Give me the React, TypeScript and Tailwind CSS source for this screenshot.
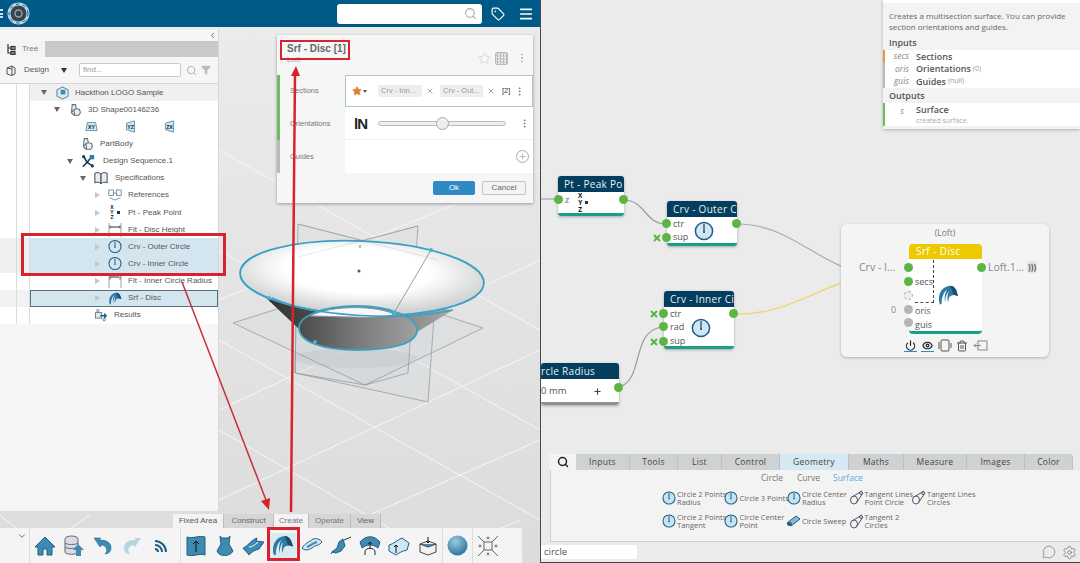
import React from "react";
import { Search, Tag, Menu, Filter, Star, X, Plus, MoreVertical, MessageCircle, Settings, Power, Eye, Trash2, ChevronDown, ChevronLeft } from "lucide-react";

const B = "#3f8ab0";
const D = "#1f5f85";

function Loft({ s = 22 }: { s?: number }) {
  return (
    <svg width={s} height={s} viewBox="0 0 24 24">
      <path d="M3 22C0 12 5 3 14 2c4 0 7 3 8 8l1 3-4-1c-3 0-5 1-6 3l-1 5c-1-4-1-8 1-12-3 3-4 7-4 12-1-4-1-9 2-14-4 3-6 9-6 16z" fill="#2a7aa3" />
      <path d="M14 2c4 0 7 3 8 8l1 3-4-1c-2-1-2-5-5-10z" fill="#174f70" />
    </svg>
  );
}
function CircleIcon({ s = 15, fill = "#cfe6f3" }: { s?: number; fill?: string }) {
  return (
    <svg width={s} height={s} viewBox="0 0 20 20">
      <circle cx="10" cy="10" r="8.6" fill={fill} stroke="#1f5f85" strokeWidth="1.5" />
      <path d="M10 3v7.5" stroke="#1f3f55" strokeWidth="1.2" />
      <circle cx="10" cy="11" r="1" fill="#1f3f55" />
    </svg>
  );
}
function Shape3D({ s = 13 }: { s?: number }) {
  return (
    <svg width={s} height={s} viewBox="0 0 16 16" fill="none" stroke="#5f6f78" strokeWidth="1.3">
      <path d="M4 2h4l1 5 4 1 1 4-2 3H6l-3-3z" fill="#eef1f3" />
      <path d="M6 8l3-1M6 8l-3 4M6 8l1 7" />
    </svg>
  );
}
function PlaneIcon({ label, wide }: { label: string; wide?: boolean }) {
  return (
    <svg width="13" height="13" viewBox="0 0 16 16">
      {wide ? <path d="M3 3h10l2 10H1z" fill="#cfe6f3" stroke="#3f8ab0" /> : <path d="M3 4l10-3v14L3 12z" fill="#cfe6f3" stroke="#3f8ab0" />}
      <text x="8" y="11" fontSize="6.5" fontWeight="700" fontFamily="Liberation Sans" textAnchor="middle" fill="#222">{label}</text>
    </svg>
  );
}
function DesignSeq() {
  return (
    <svg width="15" height="15" viewBox="0 0 16 16">
      <path d="M3 2l4 7-5 5M7 9l6 4M7 9l4-5" stroke="#153b55" strokeWidth="1.8" fill="none" />
      <rect x="10" y="0.5" width="5" height="5" fill="#2f7ea6" />
      <circle cx="3" cy="2.5" r="1.8" fill="#153b55" />
      <circle cx="13" cy="13" r="1.8" fill="#153b55" />
    </svg>
  );
}
function BookIcon() {
  return (
    <svg width="15" height="14" viewBox="0 0 16 15" fill="#e8edf0" stroke="#33424c" strokeWidth="1.1">
      <path d="M1 2c3-1 5-1 7 1v11c-2-2-4-2-7-1z" />
      <path d="M15 2c-3-1-5-1-7 1v11c2-2 4-2 7-1z" />
    </svg>
  );
}
function RefIcon() {
  return (
    <svg width="16" height="14" viewBox="0 0 18 15" fill="#f6f8f9" stroke="#5f7f92" strokeWidth="1">
      <rect x="1" y="1" width="6" height="7" />
      <rect x="11" y="1" width="6" height="7" />
      <path d="M7 5h4M2 11l7 3 7-3" fill="none" />
    </svg>
  );
}
function XYZ({ big }: { big?: boolean }) {
  return (
    <div className="flex items-center gap-[3px] leading-none">
      <div className={big ? "flex flex-col items-center text-[6.500px] font-bold leading-[7px] text-[#111]" : "flex flex-col items-center text-[5px] font-bold leading-[5px] text-[#111]"}>
        <span>X</span><span>Y</span><span>Z</span>
      </div>
      <span className="block h-[3px] w-[3px] bg-[#234]" />
    </div>
  );
}
function FltIcon({ inner }: { inner?: boolean }) {
  return (
    <svg width="14" height="14" viewBox="0 0 14 14" stroke="#333" fill="none" strokeWidth="0.8">
      <path d="M1 0v14M13 0v14" stroke="#888" />
      <path d={inner ? "M2 3h9" : "M2 4h10"} strokeWidth="1" />
      <path d="M2 2.5v3M12 2.5v3" />
    </svg>
  );
}
function Results() {
  return (
    <svg width="16" height="14" viewBox="0 0 18 16">
      <rect x="2" y="5" width="8" height="7" fill="#dfe9ef" stroke="#567" />
      <circle cx="5" cy="2.5" r="1.6" fill="none" stroke="#567" />
      <circle cx="13" cy="14" r="1.6" fill="none" stroke="#567" />
      <path d="M8 8h5V5l4 4-4 4v-3H8z" fill="#1f5f85" />
    </svg>
  );
}
function Tri({ open, hide }: { open?: boolean; hide?: boolean }) {
  if (hide) return <span className="w-[7px] shrink-0" />;
  return open ? (
    <span className="h-0 w-0 shrink-0 border-x-[3.5px] border-t-[5px] border-x-transparent border-t-[#666]" />
  ) : (
    <span className="ml-[1px] mr-[1px] h-0 w-0 shrink-0 border-y-[3.5px] border-l-[5px] border-y-transparent border-l-[#c4c4c4]" />
  );
}

type RowProps = {
  pad: string;
  gapTo: string;
  text: string;
  open?: boolean;
  hide?: boolean;
  icon: React.ReactNode;
  bg?: string;
  left?: string;
  textGap?: string;
};
function Row({ pad, gapTo, text, open, hide, icon, bg = "bg-white", left = "bg-white", textGap = "ml-[5px]" }: RowProps) {
  return (
    <div className="flex h-[17.15px] shrink-0">
      <div className={`w-[17px] border-r border-[#dcdcdc] ${left}`} />
      <div className={`w-[13px] border-r border-[#dcdcdc] ${left}`} />
      <div className={`flex flex-1 items-center ${pad} ${bg}`}>
        <Tri open={open} hide={hide} />
        <span className={`flex h-[14px] w-[14px] shrink-0 items-center justify-center ${gapTo}`}>{icon}</span>
        <span className={`${textGap} whitespace-nowrap text-[8px] text-[#555]`}>{text}</span>
      </div>
    </div>
  );
}

function TreePanel() {
  return (
    <div className="relative z-10 mt-[3px] flex h-[481px] w-[219px] flex-col border-r border-[#d8d8d8] bg-[#f6f6f6] font-['Liberation_Sans',sans-serif]">
      <div className="flex h-[11px] items-center justify-end pr-[1px] text-[#666]">
        <ChevronLeft size={9} strokeWidth={2.5} />
      </div>
      <div className="flex h-[16px] bg-[#c9c9c9]">
        <div className="flex w-[45px] items-center gap-[6px] bg-[#f4f4f4] pl-[6px]">
          <svg width="10" height="11" viewBox="0 0 10 11" fill="none" stroke="#333" strokeWidth="1.2"><path d="M2 0v9h7M2 4h6" /><rect x="5" y="2.5" width="4" height="3" /><rect x="5" y="7.5" width="4" height="3" /></svg>
          <span className="text-[8px] text-[#777]">Tree</span>
        </div>
      </div>
      <div className="flex h-[27px] items-center border-b border-[#d4d4d4] pl-[6px] text-[#555]">
        <svg width="10" height="11" viewBox="0 0 10 11" fill="none" stroke="#555"><path d="M1 3l5-2 3 2v6l-3 1.500-5-1.500zM6 1v9.500M1 3l5 1" /></svg>
        <span className="ml-[8px] w-[37px] text-[8px]">Design</span>
        <span className="h-0 w-0 border-x-[3.5px] border-t-[5px] border-x-transparent border-t-[#333]" />
        <div className="ml-[12px] flex h-[14px] w-[102px] items-center rounded-[2px] border border-[#c9c9c9] bg-white pl-[3px] text-[8px] text-[#999]">find...</div>
        <Search size={11} className="ml-[5px] text-[#aaa]" />
        <Filter size={10} className="ml-[4px] text-[#bbb]" fill="#bbb" />
      </div>
      <div className="flex flex-1 flex-col">
        <Row pad="pl-[11px]" gapTo="ml-[8px]" text="Hackthon LOGO Sample" open icon={<svg width="13" height="14" viewBox="0 0 14 15"><path d="M7 1l6 3v7l-6 3-6-3V4z" fill="#dce9f0" stroke="#4a7a96" /><rect x="5" y="4" width="5" height="5" fill="#3f8ab0" /></svg>} bg="bg-[#f0f0f0]" textGap="ml-[6px]" />
        <Row pad="pl-[24px]" gapTo="ml-[8px]" text="3D Shape00146236" open icon={<Shape3D />} textGap="ml-[6px]" />
        <div className="flex h-[17.15px] shrink-0">
          <div className="w-[17px] border-r border-[#dcdcdc] bg-white" />
          <div className="w-[13px] border-r border-[#dcdcdc] bg-white" />
          <div className="flex flex-1 items-center gap-[26px] bg-white pl-[55px]">
            <PlaneIcon label="XY" wide />
            <PlaneIcon label="YZ" />
            <PlaneIcon label="ZX" />
          </div>
        </div>
        <Row pad="pl-[36px]" gapTo="ml-[7px]" hide text="PartBody" icon={<Shape3D />} textGap="ml-[6px]" />
        <Row pad="pl-[37px]" gapTo="ml-[8px]" open text="Design Sequence.1" icon={<DesignSeq />} textGap="ml-[8px]" />
        <Row pad="pl-[50px]" gapTo="ml-[8px]" open text="Specifications" icon={<BookIcon />} textGap="ml-[7px]" />
        <Row pad="pl-[64px]" gapTo="ml-[7px]" text="References" icon={<RefIcon />} textGap="ml-[6px]" />
        <Row pad="pl-[64px]" gapTo="ml-[7px]" text="Pt - Peak Point" icon={<XYZ />} textGap="ml-[6px]" />
        <Row pad="pl-[64px]" gapTo="ml-[7px]" text="Flt - Disc Height" icon={<FltIcon />} textGap="ml-[6px]" />
        <Row pad="pl-[64px]" gapTo="ml-[7px]" text="Crv - Outer Circle" icon={<CircleIcon />} bg="bg-[#d3e5ef]" left="bg-[#efefef]" textGap="ml-[6px]" />
        <Row pad="pl-[64px]" gapTo="ml-[7px]" text="Crv - Inner Circle" icon={<CircleIcon />} bg="bg-[#d3e5ef]" left="bg-[#efefef]" textGap="ml-[6px]" />
        <Row pad="pl-[64px]" gapTo="ml-[7px]" text="Flt - Inner Circle Radius" icon={<FltIcon inner />} textGap="ml-[6px]" />
        <div className="flex h-[17.15px] shrink-0">
          <div className="w-[17px] border-r border-[#dcdcdc] bg-[#f2f2f2]" />
          <div className="w-[13px] border-r border-[#dcdcdc] bg-[#f2f2f2]" />
          <div className="flex flex-1 items-center border border-[#55707f] bg-[#d3e5ef] pl-[63px]">
            <Tri />
            <span className="ml-[7px] flex h-[14px] w-[14px] items-center justify-center"><Loft s={15} /></span>
            <span className="ml-[6px] text-[8px] text-[#555]">Srf - Disc</span>
          </div>
        </div>
        <Row pad="pl-[57px]" gapTo="ml-0" hide text="Results" icon={<Results />} textGap="ml-[6px]" />
      </div>
    </div>
  );
}

function Scene() {
  return (
    <svg className="absolute left-0 top-0 h-[563px] w-[540px]" viewBox="0 0 540 563">
      <defs>
        <linearGradient id="vp" x1="0" y1="0" x2="0" y2="1">
          <stop offset="0" stopColor="#ececec" />
          <stop offset="1" stopColor="#dcdcdc" />
        </linearGradient>
        <radialGradient id="bowlIn" cx="0.48" cy="0.4" r="0.6">
          <stop offset="0.5" stopColor="#ffffff" />
          <stop offset="1" stopColor="#c9cccb" />
        </radialGradient>
        <linearGradient id="cone" x1="0" y1="0" x2="1" y2="0">
          <stop offset="0" stopColor="#2e2e2e" />
          <stop offset="0.35" stopColor="#555555" />
          <stop offset="1" stopColor="#a8a8a8" />
        </linearGradient>
        <linearGradient id="cone2" x1="0" y1="0" x2="1" y2="0">
          <stop offset="0" stopColor="#4a4a4a" />
          <stop offset="0.5" stopColor="#7a7a7a" />
          <stop offset="1" stopColor="#a0a0a0" />
        </linearGradient>
      </defs>
      <rect width="540" height="563" fill="url(#vp)" />
      <g stroke="#f6f6f6" strokeWidth="1" fill="none">
        <path d="M219 300L540 170M219 410L540 260M219 500L540 350M260 563L540 440M219 150L540 330M219 250L540 430M219 340L540 520M219 430L450 563M0 515L60 563M20 563L90 515M420 563L520 520" />
      </g>
      <ellipse cx="355" cy="358" rx="62" ry="10" fill="#cfcfcf" opacity="0.6" />
      <g stroke="#8a939a" strokeWidth="0.7" fill="#b9c4cc" fillOpacity="0.1">
        <path d="M298 224L438 260L428 402L295 373z" />
        <path d="M418 226L297 258L295 373L365 385L408 373z" />
        <path d="M233 323L353 285L483 328L365 385z" />
      </g>
      <path d="M263 295L300 330L417 332L453 310L362 300z" fill="url(#cone)" />
      <ellipse cx="362" cy="278" rx="122" ry="37" transform="rotate(2.500 362 278)" fill="url(#bowlIn)" stroke="#3aa0c4" strokeWidth="1.800" />
      <path d="M299 328c0-12 24-22 58-22s60 12 60 24c0 14-26 20-60 20s-58-8-58-22z" fill="url(#cone2)" stroke="#3aa0c4" strokeWidth="1.800" />
      <path d="M310 316c20-11 68-11 86-1-12 1-22 3-44 2-16 0-30-1-42-1z" fill="#f8f8f8" stroke="#7c97a3" strokeWidth="1" />
      <path d="M272 298C310 316 400 322 453 310" fill="none" stroke="#3aa0c4" strokeWidth="1.600" />
      <path d="M298 257L418 226M298 224L438 260" stroke="#8a939a" strokeWidth="0.5" opacity="0.4" />
      <path d="M394 313L431 250" stroke="#7d8790" strokeWidth="0.8" />
      <circle cx="359" cy="271" r="1.500" fill="#555" />
      <path d="M360 245v3" stroke="#777" />
      <g fill="#43b3d6">
        <circle cx="431" cy="250" r="2" /><circle cx="394" cy="313" r="2.500" /><circle cx="269" cy="298" r="2" /><circle cx="315" cy="342" r="2" />
      </g>
    </svg>
  );
}

function Overlays() {
  return (
    <>
      <div className="absolute left-[21px] top-[233px] z-30 h-[43px] w-[205px] border-[3px] border-[#d8232f]" />
      <div className="absolute left-[280px] top-[40px] z-30 h-[20px] w-[70px] border-[2px] border-[#d8232f]" />
      <div className="absolute left-[267px] top-[527px] z-30 h-[34px] w-[33px] border-[3px] border-[#d8232f]" />
      <svg className="pointer-events-none absolute left-0 top-0 z-20 h-[563px] w-[540px]" viewBox="0 0 540 563">
        <path d="M291 512L295 74" stroke="#d8232f" strokeWidth="2.500" fill="none" />
        <path d="M296 66l-5 10h9z" fill="#d8232f" />
        <path d="M182 282L266 500" stroke="#c8303a" strokeWidth="1.500" fill="none" />
        <path d="M269 510l-8-9 9-3z" fill="#d8232f" />
      </svg>
    </>
  );
}

function Dialog() {
  const lab = "flex w-[68px] items-center pl-[13px] text-[7.500px] text-[#777]";
  return (
    <div className="absolute left-[277px] top-[35px] z-10 flex h-[168px] w-[256px] flex-col bg-[#f6f6f6] font-['Liberation_Sans',sans-serif] shadow-[0_1px_3px_rgba(0,0,0,0.35)]">
      <div className="flex h-[40px] justify-between pl-[10px] pr-[5px] pt-[8px]">
        <div>
          <div className="text-[10px] font-bold leading-[12px] text-[#666]">Srf - Disc [1]</div>
          <div className="text-[8px] leading-[10px] text-[#aaa]">Loft</div>
        </div>
        <div className="flex items-center gap-[4px] pb-[2px] text-[#aaa]">
          <Star size={13} className="text-[#ddd]" />
          <span className="h-[13px] w-[13px] rounded-[2px] border border-[#bbb] bg-[repeating-conic-gradient(#bbb_0_25%,#eee_0_50%)] bg-[length:3px_3px]" />
          <MoreVertical size={12} className="ml-[4px]" />
        </div>
      </div>
      <div className="flex h-[32px] border-l-[3px] border-[#6ebd5f]">
        <div className={`${lab} -ml-[3px]`}>Sections</div>
        <div className="flex flex-1 items-center border border-[#a9c6d8] bg-white pl-[6px] text-[7.500px] text-[#999]">
          <Star size={10} fill="#d9822b" stroke="#d9822b" />
          <span className="ml-[1px] h-0 w-0 border-x-[2px] border-t-[3px] border-x-transparent border-t-[#555]" />
          <span className="ml-[11px] flex h-[12px] w-[44px] items-center bg-[#eeeeee] pl-[3px]">Crv - Inn...</span>
          <X size={8} className="ml-[4px] text-[#777]" />
          <span className="ml-[6px] flex h-[12px] w-[43px] items-center bg-[#eeeeee] pl-[3px]">Crv - Out...</span>
          <X size={8} className="ml-[4px] text-[#777]" />
          <span className="ml-[7px] text-[#333]">[2]</span>
          <MoreVertical size={11} className="ml-[4px] text-[#777]" />
        </div>
      </div>
      <div className="flex h-[33px] border-l-[3px] border-[#6ebd5f]">
        <div className={`${lab} -ml-[3px]`}>Orientations</div>
        <div className="flex flex-1 items-center border-b border-[#f0f0f0] bg-white pl-[9px]">
          <span className="w-[16px] text-[15px] font-bold leading-none tracking-[-1px] text-[#222]">lN</span>
          <div className="relative ml-[8px] h-[5px] w-[128px] rounded-full border border-[#bbb] bg-[#eee]">
            <span className="absolute left-[57px] top-[-5px] h-[13px] w-[13px] rounded-full border border-[#aaa] bg-[#efefef]" />
          </div>
          <MoreVertical size={11} className="ml-[13px] text-[#777]" />
        </div>
      </div>
      <div className="flex h-[33px] border-l-[3px] border-[#bbbbbb]">
        <div className={`${lab} -ml-[3px]`}>Guides</div>
        <div className="flex flex-1 items-center justify-end bg-white pr-[4px]">
          <span className="flex h-[13px] w-[13px] items-center justify-center rounded-full border border-[#aaa] text-[#aaa]"><Plus size={9} /></span>
        </div>
      </div>
      <div className="flex flex-1 items-center justify-end gap-[7px] pr-[7px] text-[8px]">
        <span className="flex h-[14px] w-[42px] items-center justify-center rounded-[2px] bg-[#2f8ac4] text-white">Ok</span>
        <span className="flex h-[14px] w-[44px] items-center justify-center rounded-[2px] border border-[#c4c4c4] bg-[#f4f4f4] text-[#666]">Cancel</span>
      </div>
    </div>
  );
}

const TB = ({ children }: { children: React.ReactNode }) => <span className="flex h-full w-[29px] shrink-0 items-center justify-center">{children}</span>;

function Toolbar() {
  const tabs: [string, string, string][] = [
    ["Fixed Area", "w-[51px]", "bg-[#f3f3f3] text-[#555]"],
    ["Construct", "w-[50px]", "bg-[#d6d6d6] text-[#666]"],
    ["Create", "w-[35px]", "bg-[#f3f3f3] text-[#777]"],
    ["Operate", "w-[42px]", "bg-[#d6d6d6] text-[#777]"],
    ["View", "w-[30px]", "bg-[#d6d6d6] text-[#666]"],
  ];
  return (
    <div className="absolute bottom-0 left-0 z-10 flex h-[49px] w-[522px] flex-col font-['Liberation_Sans',sans-serif]">
      <div className="ml-[173px] flex h-[14px] items-center">
        {tabs.map(([t, w, c]) => (
          <span key={t} className={`flex h-full items-center justify-center border-r border-[#bcbcbc] text-[8px] ${w} ${c}`}>{t}</span>
        ))}
      </div>
      <div className="flex flex-1 items-center bg-[#f4f4f4]">
        <span className="flex h-full w-[30px] items-start justify-end border-r border-[#ddd] pr-[2px] pt-[3px] text-[#555]"><ChevronDown size={10} /></span>
        <TB><svg width="22" height="20" viewBox="0 0 22 20"><path d="M11 1L1 11h3v8h5v-6h4v6h5v-8h3z" fill={B} stroke={D} /></svg></TB>
        <TB><svg width="22" height="22" viewBox="0 0 22 22"><path d="M2 4c0-4 13-4 13 0v13c0 3-13 3-13 0z" fill="#d8dde0" stroke="#667" /><path d="M2 8c2 2 11 2 13 0M2 12c2 2 11 2 13 0" fill="none" stroke="#667" /><path d="M15 9l6 6h-3v6h-5v-6h-3z" fill={B} /></svg></TB>
        <TB><svg width="20" height="18" viewBox="0 0 20 18"><path d="M1 1h7L5.500 3.500C11 2 19 5 18 12c-.5 3-3 5-6 5 3-3 2-8-3-9L7 10z" fill={B} stroke={D} strokeWidth="0.5" /></svg></TB>
        <TB><svg width="20" height="18" viewBox="0 0 20 18"><path d="M19 1h-7l2.500 2.500C9 2 1 5 2 12c.5 3 3 5 6 5-3-3-2-8 3-9l2 2z" fill="#b7d4e2" /></svg></TB>
        <TB><svg width="16" height="16" viewBox="0 0 16 16" fill="none" stroke={D} strokeWidth="2"><path d="M2 3c6 0 11 5 11 11M2 7c4 0 7 3 7 7M2 11c2 0 3 1 3 3" /></svg></TB>
        <span className="ml-[5px] flex h-full items-center border-l border-[#ddd]">
          <TB><svg width="22" height="24" viewBox="0 0 22 24"><path d="M2 3c6 2 12-2 18 0v18c-6-2-12 2-18 0z" fill={B} stroke={D} /><path d="M11 18V7M8 10l3-3 3 3" stroke="#111" fill="none" /></svg></TB>
          <TB><svg width="20" height="24" viewBox="0 0 20 24"><path d="M5 2l2 2h6l2-2-1 8 4 7c-3 6-14 6-16 0l4-7z" fill={B} stroke={D} /></svg></TB>
          <TB><svg width="24" height="20" viewBox="0 0 24 20"><path d="M1 12c4-1 8-8 14-10l-1 3 8 1-5 7c-4 1-8 3-10 6C6 17 3 15 1 12z" fill={B} stroke={D} /><path d="M7 11c3 0 6-2 9-5" stroke="#fff" fill="none" /></svg></TB>
          <TB><span className="flex h-[26px] w-[26px] items-center justify-center bg-[#dbe9f1]"><Loft s={23} /></span></TB>
          <TB><svg width="22" height="20" viewBox="0 0 22 20"><path d="M1 12c4-6 8-6 11-9 3-1 7 0 9 3-3 4-7 3-10 6-3 2-7 3-10 0z" fill="#cfe6f3" stroke={D} /><path d="M6 11c3-1 6-4 10-5" stroke={B} fill="none" strokeWidth="2" /></svg></TB>
          <TB><svg width="22" height="20" viewBox="0 0 22 20"><path d="M2 16l5-4 2-6 4-3 2 7-4 5-5 2z" fill={B} stroke={D} /><path d="M14 4l7-3M3 15l-2 3" stroke="#333" /></svg></TB>
          <TB><svg width="22" height="22" viewBox="0 0 22 22"><path d="M1 7c6-7 14-7 20 0l-2 6c-5-4-11-4-16 0z" fill={B} stroke={D} /><path d="M11 14V7M9 9l2-2 2 2M6 20v-3c0-5 10-5 10 0v3" stroke="#222" fill="none" /></svg></TB>
          <TB><svg width="22" height="20" viewBox="0 0 22 20"><path d="M1 9c5-1 8-5 13-7l7 5-2 7c-5 1-8 3-11 5L1 15z" fill="#cfe6f3" stroke={D} /><path d="M8 17V9M6 11l2-2 2 2" stroke="#111" fill="none" /></svg></TB>
          <TB><svg width="20" height="20" viewBox="0 0 20 20"><path d="M2 8l8-3 8 3v8l-8 3-8-3z" fill="#f2f2f2" stroke="#444" /><path d="M2 8l8 3 8-3" fill={B} stroke="#444" /><path d="M10 1v6M8 5l2 2 2-2" stroke="#111" fill="none" /></svg></TB>
        </span>
        <span className="flex h-full items-center border-l border-[#ddd]">
          <TB><svg width="21" height="21" viewBox="0 0 21 21"><defs><radialGradient id="ball" cx="0.4" cy="0.3" r="0.8"><stop offset="0" stopColor="#9ccbe2" /><stop offset="1" stopColor="#1f6a94" /></radialGradient></defs><circle cx="10.500" cy="10.500" r="10" fill="url(#ball)" /></svg></TB>
        </span>
        <span className="flex h-full items-center border-l border-[#ddd]">
          <TB><svg width="22" height="22" viewBox="0 0 22 22" stroke="#666" fill="none"><path d="M1 1l6 6M21 1l-6 6M1 21l6-6M21 21l-6-6" /><rect x="7" y="7" width="8" height="8" /><circle cx="3" cy="11" r="1" /><circle cx="19" cy="11" r="1" /><circle cx="11" cy="3" r="1" /><circle cx="11" cy="19" r="1" /></svg></TB>
        </span>
      </div>
    </div>
  );
}

function LeftPane() {
  return (
    <div className="relative h-full w-[540px] shrink-0 overflow-hidden">
      <Scene />
      <div className="relative z-10 flex h-[27px] items-center bg-[#005a87]">
        <div className="flex h-[9px] w-[3px] flex-col justify-between">
          <span className="h-[2px] bg-[#cfe0ea]" /><span className="h-[2px] bg-[#cfe0ea]" /><span className="h-[2px] bg-[#cfe0ea]" />
        </div>
        <svg className="ml-[4px]" width="23" height="23" viewBox="0 0 23 23">
          <circle cx="11.500" cy="11.500" r="11" fill="#b9d3e2" />
          <circle cx="11.500" cy="11.500" r="8" fill="#37444e" />
          <circle cx="11.500" cy="11.500" r="3.500" fill="none" stroke="#8fa2ad" strokeWidth="1.500" />
          <circle cx="11.500" cy="11.500" r="9.500" fill="none" stroke="#005a87" strokeWidth="1" strokeDasharray="3 4" />
        </svg>
        <div className="ml-[307px] flex h-[20px] w-[145px] items-center justify-end rounded-[3px] bg-white pr-[5px]">
          <Search size={13} className="text-[#aaa]" />
        </div>
        <Tag size={14} className="ml-[9px] text-white" />
        <Menu size={16} className="ml-[13px] text-white" strokeWidth={2.5} />
      </div>
      <TreePanel />
      <Dialog />
      <Toolbar />
      <Overlays />
    </div>
  );
}

function Port({ cls, color = "bg-[#5db544]" }: { cls: string; color?: string }) {
  return <span className={`absolute h-[9px] w-[9px] rounded-full ${color} ${cls}`} />;
}
function Cross({ cls }: { cls: string }) {
  return (
    <svg className={`absolute ${cls}`} width="8" height="8" viewBox="0 0 8 8" stroke="#5db544" strokeWidth="2" fill="none">
      <path d="M1 1l6 6M7 1L1 7" />
    </svg>
  );
}
function Node({ cls, title, children, foot = "border-[#16a085]" }: { cls: string; title: string; children: React.ReactNode; foot?: string }) {
  return (
    <div className={`absolute flex flex-col rounded-[3px] bg-white shadow-[0_1px_3px_rgba(0,0,0,0.3)] ${cls}`}>
      <div className="h-[16px] whitespace-nowrap rounded-t-[3px] bg-[#033e5e] pl-[6px] text-[10px] leading-[16px] tracking-[0.3px] text-[#e8f0f4]">{title}</div>
      <div className={`relative flex-1 rounded-b-[3px] border-b-[3px] ${foot}`}>{children}</div>
    </div>
  );
}

function Canvas() {
  return (
    <div className="relative h-[454px] shrink-0 font-['Open_Sans',sans-serif]">
      <svg className="absolute left-0 top-0 h-[454px] w-[539px]" viewBox="541 0 539 454" fill="none">
        <path d="M541 199h17" stroke="#999" />
        <path d="M624 200C645 200 645 224 666 224" stroke="#999" strokeWidth="1.200" />
        <path d="M737 224C800 224 820 278 908 282" stroke="#aaa" strokeWidth="1.200" />
        <path d="M733 314C800 316 830 272 908 268" stroke="#ecd873" strokeWidth="1.400" />
        <path d="M619 387C645 380 630 330 663 327" stroke="#999" strokeWidth="1.200" />
      </svg>

      <div className="absolute left-[342px] top-0 w-[197px] bg-[#f3f3f3] pb-[3px] shadow-[0_1px_3px_rgba(0,0,0,0.25)]">
        <div className="h-[3px] bg-white" />
        <div className="px-[6px] pt-[7px] text-[8px] leading-[11px] text-[#666]">
          Creates a multisection surface. You can provide<br />section orientations and guides.
        </div>
        <div className="pl-[6px] pt-[5px] text-[9px] font-semibold leading-[12px] text-[#555]">Inputs</div>
        <div className="mt-[1px] bg-white text-[9px] text-[#555]">
          <div className="flex h-[13px] items-center border-l-[2px] border-[#e39a3b]"><span className="w-[24px] text-right text-[8.500px] italic text-[#888]">secs</span><span className="ml-[7px] font-semibold">Sections</span></div>
          <div className="flex h-[12px] items-center border-l-[2px] border-[#bbb]"><span className="w-[24px] text-right text-[8.500px] italic text-[#888]">oris</span><span className="ml-[7px] font-semibold">Orientations</span><span className="ml-[2px] text-[7px] text-[#999]">(0)</span></div>
          <div className="flex h-[13px] items-center border-l-[2px] border-[#bbb]"><span className="w-[24px] text-right text-[8.500px] italic text-[#888]">guis</span><span className="ml-[7px] font-semibold">Guides</span><span className="ml-[2px] text-[7px] text-[#999]">(null)</span></div>
        </div>
        <div className="pl-[6px] pt-[1px] text-[9px] font-semibold leading-[14px] text-[#555]">Outputs</div>
        <div className="flex h-[23px] border-l-[2px] border-[#6ebd5f] bg-white">
          <span className="w-[19px] pt-[1px] text-right text-[8.500px] italic leading-[13px] text-[#888]">s</span>
          <div className="ml-[12px] pt-[1px]">
            <div className="text-[9px] font-semibold leading-[12px] text-[#555]">Surface</div>
            <div className="text-[7px] leading-[9px] text-[#aaa]">created surface.</div>
          </div>
        </div>
      </div>

      <Node cls="left-[17px] top-[176px] h-[40px] w-[66px]" title="Pt - Peak Po">
        <Port cls="left-[-4px] top-[3px]" />
        <span className="absolute left-[7px] top-[1px] text-[9px] text-[#666]">z</span>
        <div className="absolute left-[20px] top-0"><XYZ big /></div>
        <Port cls="right-[-4px] top-[3px]" />
      </Node>

      <Node cls="left-[126px] top-[201px] h-[45px] w-[70px]" title="Crv - Outer C">
        <Port cls="left-[-5px] top-[2px]" />
        <Port cls="left-[-5px] top-[16px]" />
        <Cross cls="left-[-14px] top-[17px]" />
        <span className="absolute left-[6px] top-0 text-[9px] text-[#555]">ctr</span>
        <span className="absolute left-[6px] top-[13px] text-[9px] text-[#555]">sup</span>
        <div className="absolute left-[27px] top-[4px]"><CircleIcon s={20} /></div>
        <Port cls="right-[-4px] top-[2px]" />
      </Node>

      <Node cls="left-[123px] top-[291px] h-[58px] w-[70px]" title="Crv - Inner Ci">
        <Port cls="left-[-5px] top-[2px]" />
        <Port cls="left-[-5px] top-[15px]" />
        <Port cls="left-[-5px] top-[30px]" />
        <Cross cls="left-[-14px] top-[3px]" />
        <Cross cls="left-[-14px] top-[31px]" />
        <span className="absolute left-[6px] top-0 text-[9px] text-[#555]">ctr</span>
        <span className="absolute left-[6px] top-[13px] text-[9px] text-[#555]">rad</span>
        <span className="absolute left-[6px] top-[27px] text-[9px] text-[#555]">sup</span>
        <div className="absolute left-[27px] top-[11px]"><CircleIcon s={20} /></div>
        <Port cls="right-[-4px] top-[2px]" />
      </Node>

      <Node cls="left-0 top-[363px] h-[42px] w-[78px]" title="" foot="border-[#8f8f8f]">
        <span className="absolute left-0 top-[-16px] whitespace-nowrap text-[10px] leading-[16px] tracking-[0.3px] text-[#e8f0f4]">rcle Radius</span>
        <span className="absolute left-0 top-[5px] text-[9.500px] text-[#555]">0 mm</span>
        <Plus size={9} className="absolute left-[52px] top-[8px] text-[#444]" strokeWidth={3} />
        <Port cls="right-[-4px] top-[4px]" />
      </Node>

      <div className="absolute left-[300px] top-[224px] h-[133px] w-[208px] rounded-[6px] bg-[#f4f4f4] shadow-[0_1px_3px_rgba(0,0,0,0.25)]">
        <div className="pt-[3px] text-center text-[8.500px] leading-[12px] text-[#777]">(Loft)</div>
        <div className="absolute left-[68px] top-[20px] flex h-[90px] w-[73px] flex-col rounded-[4px] bg-white">
          <div className="h-[15px] rounded-t-[4px] bg-[#eec900] pl-[7px] text-[10px] leading-[15px] tracking-[0.4px] text-white">Srf - Disc</div>
          <div className="relative flex-1 rounded-b-[4px] border-b-[3px] border-[#16a085]">
            <div className="absolute left-[6px] top-[1px] h-[43px] w-[19px] border-b border-r border-dashed border-[#444]" />
            <Port cls="left-[-5px] top-[4px]" />
            <Port cls="left-[-5px] top-[18px]" />
            <span className="absolute left-[-5px] top-[32px] h-[9px] w-[9px] rounded-full border border-dashed border-[#aaa] bg-[#eee]" />
            <Port cls="left-[-5px] top-[46px]" color="bg-[#b5b5b5]" />
            <Port cls="left-[-5px] top-[59px]" color="bg-[#b5b5b5]" />
            <Port cls="right-[-4px] top-[4px]" />
            <span className="absolute left-[6px] top-[16px] text-[9px] text-[#555]">secs</span>
            <span className="absolute left-[6px] top-[45px] text-[9px] text-[#555]">oris</span>
            <span className="absolute left-[6px] top-[59px] text-[9px] text-[#555]">guis</span>
            <div className="absolute left-[28px] top-[25px]"><Loft s={22} /></div>
          </div>
        </div>
        <span className="absolute left-[18px] top-[36px] text-[10.500px] text-[#888]">Crv - I...</span>
        <span className="absolute left-[147px] top-[36px] text-[10.500px] text-[#888]">Loft.1...</span>
        <span className="absolute left-[186px] top-[37px] rounded-[3px] bg-[#e4e4e4] px-[1px] text-[8px] font-bold text-[#555]">)))</span>
        <span className="absolute left-[50px] top-[79px] text-[9px] text-[#888]">0</span>
        <div className="absolute left-[63px] top-[115px] flex items-center gap-[4px] text-[#555]">
          <span className="border-b-[1.500px] border-[#2f8ac4] px-[1px]"><Power size={11} strokeWidth={2.500} className="text-[#222]" /></span>
          <span className="border-b-[1.500px] border-[#2f8ac4] px-[1px]"><Eye size={11} strokeWidth={2.500} className="text-[#222]" /></span>
          <svg width="14" height="13" viewBox="0 0 14 13" fill="none" stroke="#555"><rect x="3" y="1" width="8" height="11" rx="1" /><path d="M1 3v7M13 4v5" /></svg>
          <Trash2 size={12} />
          <svg className="ml-[1px]" width="15" height="11" viewBox="0 0 15 11" fill="none" stroke="#888"><rect x="5" y="1" width="9" height="9" /><path d="M1 5.500h7M3 3.500l-2 2 2 2" /></svg>
        </div>
      </div>
    </div>
  );
}

function ToolItem({ icon, lines }: { icon: React.ReactNode; lines: string[] }) {
  return (
    <div className="flex h-[23.500px] items-center">
      <span className="flex h-[16px] w-[15px] shrink-0 items-center justify-center">{icon}</span>
      <span className="whitespace-nowrap pl-[1px] text-[7.500px] leading-[8px] text-[#666]">
        {lines.map((l) => (<span key={l} className="block">{l}</span>))}
      </span>
    </div>
  );
}
function Cyl() {
  return (
    <svg width="15" height="15" viewBox="0 0 15 15" fill="none" stroke="#556">
      <ellipse cx="5" cy="10" rx="3.500" ry="4" />
      <path d="M3 7l10-6M7.500 12.500L14 3" />
      <circle cx="12" cy="3" r="1.500" />
    </svg>
  );
}
function Sweep() {
  return (
    <svg width="15" height="12" viewBox="0 0 15 12">
      <path d="M1 8l9-7 4 3-9 7z" fill="#8cb9d1" stroke="#1f5f85" />
      <ellipse cx="3.500" cy="9" rx="2.500" ry="2" fill="#1f5f85" />
    </svg>
  );
}

function Library() {
  const tabs: [string, string, string][] = [
    ["Inputs", "w-[54px]", "bg-[#cfd2d3]"],
    ["Tools", "w-[48px]", "bg-[#cfd2d3]"],
    ["List", "w-[44px]", "bg-[#cfd2d3]"],
    ["Control", "w-[58px]", "bg-[#cfd2d3]"],
    ["Geometry", "w-[69px]", "bg-[#d5e8f3]"],
    ["Maths", "w-[55px]", "bg-[#cfd2d3]"],
    ["Measure", "w-[63px]", "bg-[#cfd2d3]"],
    ["Images", "w-[58px]", "bg-[#cfd2d3]"],
    ["Color", "w-[48px] rounded-tr-[4px]", "bg-[#cfd2d3]"],
  ];
  const pale = "#c4e3f4";
  return (
    <div className="flex flex-1 flex-col font-['Open_Sans',sans-serif]">
      <div className="ml-[8px] flex h-[16px] shrink-0">
        <span className="flex w-[27px] items-center justify-center bg-[#f3f3f3] text-[#222]"><Search size={12} strokeWidth={3} /></span>
        {tabs.map(([t, w, c]) => (
          <span key={t} className={`flex items-center justify-center border-r border-[#bdc1c2] text-[8.500px] font-medium tracking-[0.3px] text-[#444] ${w} ${c}`}>{t}</span>
        ))}
      </div>
      <div className="ml-[9px] flex h-[72px] shrink-0 flex-col border-b border-l border-[#d0d0d0] bg-[#f3f3f3]">
        <div className="flex h-[16px] items-center pl-[210px] text-[8.500px] text-[#777]">
          <span className="w-[36px]">Circle</span>
          <span className="w-[36px]">Curve</span>
          <span className="text-[#5fa8d8]">Surface</span>
        </div>
        <div className="ml-[110px] grid grid-cols-[repeat(5,62.500px)]">
          <ToolItem icon={<CircleIcon s={14} fill={pale} />} lines={["Circle 2 Points", "Radius"]} />
          <ToolItem icon={<CircleIcon s={14} fill={pale} />} lines={["Circle 3 Points"]} />
          <ToolItem icon={<CircleIcon s={14} fill={pale} />} lines={["Circle Center", "Radius"]} />
          <ToolItem icon={<Cyl />} lines={["Tangent Lines", "Point Circle"]} />
          <ToolItem icon={<Cyl />} lines={["Tangent Lines", "Circles"]} />
          <ToolItem icon={<CircleIcon s={14} fill={pale} />} lines={["Circle 2 Points", "Tangent"]} />
          <ToolItem icon={<CircleIcon s={14} fill={pale} />} lines={["Circle Center", "Point"]} />
          <ToolItem icon={<Sweep />} lines={["Circle Sweep"]} />
          <ToolItem icon={<Cyl />} lines={["Tangent 2", "Circles"]} />
        </div>
      </div>
      <div className="flex flex-1 items-center justify-between border-b border-[#444] pr-[3px]">
        <div className="flex h-[14px] w-[96px] items-center rounded-[2px] bg-white pl-[3px] text-[9.500px] text-[#555]">circle</div>
        <div className="flex items-center gap-[6px] text-[#777]">
          <MessageCircle size={14} strokeWidth={1.200} />
          <Settings size={15} strokeWidth={1.200} />
        </div>
      </div>
    </div>
  );
}

export default function App() {
  return (
    <div className="flex h-[563px] w-[1080px] overflow-hidden bg-[#ebebeb]">
      <LeftPane />
      <div className="h-full w-[1px] shrink-0 bg-[#4a4a4a]" />
      <div className="flex h-full flex-1 flex-col overflow-hidden">
        <Canvas />
        <Library />
      </div>
    </div>
  );
}
